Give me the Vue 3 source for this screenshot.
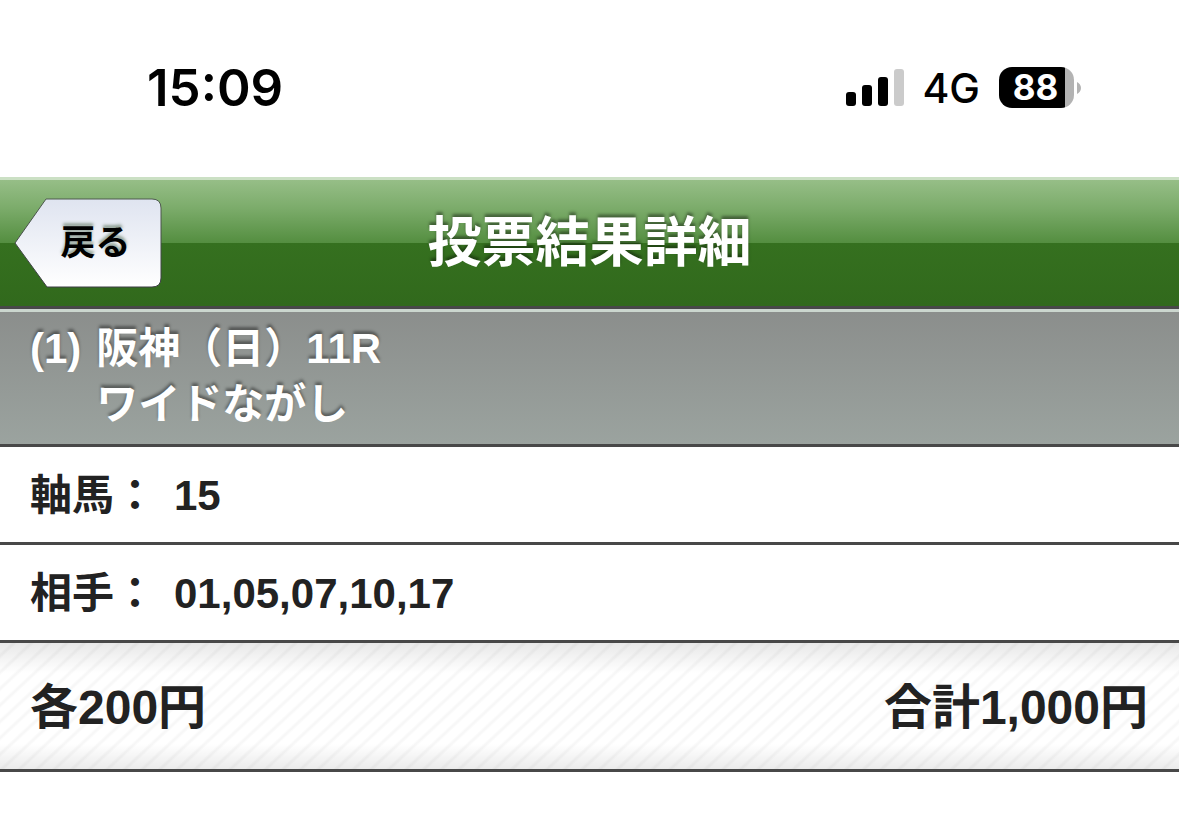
<script setup>
const bars = [
  { x: 0, h: 14 },
  { x: 16, h: 21 },
  { x: 32, h: 29 },
  { x: 48, h: 37 }
]
const rows = [
  { label: '軸馬：', value: '15' },
  { label: '相手：', value: '01,05,07,10,17' }
]
</script>

<template>
  <div class="screen">
    <div class="status">
      <time class="clock">15:09</time>
      <div class="indicators">
        <svg class="signal" width="58" height="37" viewBox="0 0 58 37" aria-hidden="true">
          <rect
            v-for="(bar, i) in bars"
            :key="bar.x"
            :x="bar.x"
            :y="37 - bar.h"
            width="10"
            :height="bar.h"
            rx="3"
            :fill="i < 3 ? '#000' : '#cbcbcb'"
          />
        </svg>
        <span class="network">4G</span>
        <span class="battery">
          <span class="level">88</span>
          <svg width="4" height="12" viewBox="0 0 4 12" aria-hidden="true">
            <path d="M0 0C2 1 4 3 4 6S2 11 0 12Z" fill="#b3b3b3" />
          </svg>
        </span>
      </div>
    </div>

    <header class="header">
      <button type="button" class="back">
        <svg class="back-shape" width="148" height="92" viewBox="0 0 148 92" aria-hidden="true">
          <defs>
            <linearGradient id="back-fill" x1="0" y1="0" x2="0" y2="1">
              <stop offset="0" stop-color="#dfe4f0" />
              <stop offset="1" stop-color="#ffffff" />
            </linearGradient>
            <linearGradient id="back-line" x1="0" y1="0" x2="0" y2="1">
              <stop offset="0" stop-color="#4e5a4e" />
              <stop offset="1" stop-color="#3c3c44" />
            </linearGradient>
          </defs>
          <path
            d="M32 2H138Q147 2 147 11V81Q147 90 138 90H33L1 46Z"
            fill="url(#back-fill)"
            stroke="url(#back-line)"
            stroke-width="1"
            stroke-linejoin="round"
          />
        </svg>
        <span class="back-text">戻る</span>
      </button>
      <h1 class="title">投票結果詳細</h1>
    </header>

    <main>
      <h2 class="race">
        <span>(1)</span>
        <span>阪神（日）11R<br />ワイドながし</span>
      </h2>
      <dl class="rows">
        <div v-for="row in rows" :key="row.label" class="row">
          <dt>{{ row.label }}</dt>
          <dd>{{ row.value }}</dd>
        </div>
      </dl>
      <div class="total">
        <span>各200円</span>
        <span>合計1,000円</span>
      </div>
    </main>
  </div>
</template>

<style>
body {
  margin: 0;
  background: #fff;
}
</style>

<style scoped>
.screen {
  font-family: "Liberation Sans", "Noto Sans CJK JP", sans-serif;
  font-weight: 700;
  color: #222;
}

.status {
  display: flex;
  align-items: center;
  justify-content: space-between;
  box-sizing: border-box;
  height: 177px;
  padding: 0 98px 2px 147px;
  font-family: Inter, sans-serif;
  color: #000;
}

.clock {
  font-size: 51px;
  font-weight: 600;
  line-height: 60px;
}

.indicators {
  display: flex;
  align-items: center;
}

.network {
  margin: 0 19px 0 18px;
  font-size: 41px;
  font-weight: 500;
  line-height: 48px;
}

.battery {
  display: flex;
  align-items: center;
  gap: 3px;
}

.level {
  box-sizing: border-box;
  width: 75px;
  height: 41px;
  padding-right: 2px;
  border-radius: 13px;
  background: linear-gradient(90deg, #000 66px, #b3b3b3 66px);
  color: #fff;
  font-size: 35px;
  font-weight: 700;
  line-height: 41px;
  text-align: center;
}

.header {
  display: grid;
  grid-template-columns: 1fr auto 1fr;
  align-items: center;
  height: 126px;
  padding: 0 14px;
  border-top: 3px solid #cbe0c4;
  border-bottom: 3px solid #484848;
  background: linear-gradient(#96be87 0%, #7cac6b 22%, #548e40 50%, #35701f 50%, #31691c 100%);
}

.back {
  position: relative;
  justify-self: start;
  width: 148px;
  height: 92px;
  padding: 0 0 0 15px;
  border: 0;
  background: none;
  color: #000;
  font: inherit;
  font-size: 35px;
  line-height: 52px;
  text-shadow: 0 -3px 3px rgba(60, 90, 60, 0.5);
}

.back-shape {
  position: absolute;
  inset: 0;
}

.back-text {
  position: relative;
}

.title {
  margin: 0;
  color: #fff;
  font-size: 54px;
  line-height: 80px;
  text-shadow: 0 -3px 3px rgba(0, 0, 0, 0.4);
}

.race {
  display: flex;
  gap: 15px;
  margin: 0;
  padding: 9px 30px 11px;
  border-top: 3px solid #cbd6ce;
  border-bottom: 3px solid #484848;
  background: linear-gradient(#8b8e8c, #9ba39f);
  color: #fff;
  font-size: 42px;
  line-height: 56px;
  text-shadow: 0 -3px 3px rgba(0, 0, 0, 0.4);
}

.rows {
  margin: 0;
}

.row {
  display: flex;
  gap: 18px;
  padding: 17px 30px 15px;
  border-bottom: 3px solid #484848;
  font-size: 42px;
  line-height: 63px;
}

.row dd {
  margin: 0;
}

.total {
  display: flex;
  justify-content: space-between;
  padding: 29px 31px 25px 30px;
  border-bottom: 3px solid #484848;
  background:
    linear-gradient(rgba(0, 0, 0, 0.09), transparent 24%, transparent 80%, rgba(0, 0, 0, 0.08)),
    repeating-linear-gradient(137deg, #fff 0 7px, #f7f7f7 9px 10px, #fff 12px);
  font-size: 48px;
  line-height: 72px;
}
</style>
